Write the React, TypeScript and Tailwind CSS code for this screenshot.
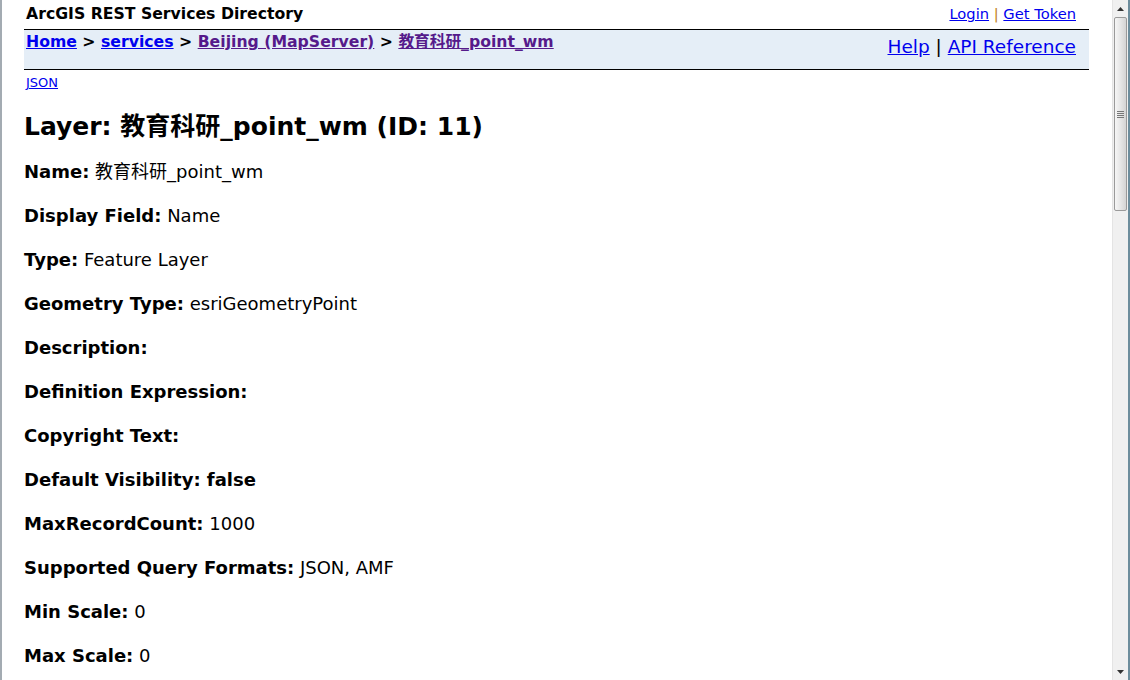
const fields: { label: string; value?: string }[] = [
  { label: "Name:", value: "教育科研_point_wm" },
  { label: "Display Field:", value: "Name" },
  { label: "Type:", value: "Feature Layer" },
  { label: "Geometry Type:", value: "esriGeometryPoint" },
  { label: "Description:" },
  { label: "Definition Expression:" },
  { label: "Copyright Text:" },
  { label: "Default Visibility: false" },
  { label: "MaxRecordCount:", value: "1000" },
  { label: "Supported Query Formats:", value: "JSON, AMF" },
  { label: "Min Scale:", value: "0" },
  { label: "Max Scale:", value: "0" },
];

const font = "font-['Verdana','DejaVu_Sans','Noto_Sans_CJK_SC',sans-serif]";

function Scrollbar() {
  return (
    <div className="flex w-[16px] shrink-0 flex-col bg-[#f0f0f0] border-l border-[#e4e4e4]">
      <div className="flex h-[17px] items-center justify-center">
        <svg width="7" height="4" viewBox="0 0 7 4">
          <path d="M3.5 0 L7 4 L0 4 Z" fill="#333" />
        </svg>
      </div>
      <div className="mx-[1px] flex h-[194px] items-center justify-center rounded-[2px] border border-[#9a9a9a] bg-gradient-to-r from-[#f6f6f6] via-[#e6e6e6] to-[#d4d4d4]">
        <div className="flex flex-col gap-[1px]">
          <div className="h-[1px] w-[7px] bg-[#777]" />
          <div className="h-[1px] w-[7px] bg-[#777]" />
          <div className="h-[1px] w-[7px] bg-[#777]" />
          <div className="h-[1px] w-[7px] bg-[#777]" />
        </div>
      </div>
      <div className="flex-1" />
      <div className="flex h-[17px] items-center justify-center">
        <svg width="7" height="4" viewBox="0 0 7 4">
          <path d="M0 0 L7 0 L3.5 4 Z" fill="#333" />
        </svg>
      </div>
    </div>
  );
}

export default function App() {
  return (
    <div className={`flex h-[680px] w-[1130px] overflow-hidden bg-white text-black ${font}`}>
      <div className="w-[2px] shrink-0 bg-[#a3abb2]" />
      <main className="flex-1 overflow-hidden pl-[22px] pr-[23px]">
        <div className="flex items-end justify-between pt-[3px] pb-[5px] pl-[2px] pr-[13px]">
          <span className="text-[15.7px] font-bold leading-[21px]">ArcGIS REST Services Directory</span>
          <span className="text-[14.7px] leading-[21px]">
            <a href="#" className="text-[#0000ee] underline">Login</a>
            <span className="text-[#c08020]"> | </span>
            <a href="#" className="text-[#0000ee] underline">Get Token</a>
          </span>
        </div>
        <div className="flex h-[41px] justify-between border-y border-black bg-[#e5eef7] pl-[2px] pr-[13px]">
          <div className="pt-[2px] text-[15.7px] font-bold leading-[20px]">
            <a href="#" className="text-[#0000ee] underline">Home</a>
            {" > "}
            <a href="#" className="text-[#0000ee] underline">services</a>
            {" > "}
            <a href="#" className="text-[#551a8b] underline">Beijing (MapServer)</a>
            {" > "}
            <a href="#" className="text-[#551a8b] underline">教育科研_point_wm</a>
          </div>
          <div className="pt-[5px] text-[18.5px] leading-[24px]">
            <a href="#" className="text-[#0000ee] underline">Help</a>
            {" | "}
            <a href="#" className="text-[#0000ee] underline">API Reference</a>
          </div>
        </div>
        <div className="pt-[5px] pl-[2px] text-[13px] leading-[16px]">
          <a href="#" className="text-[#0000ee] underline">JSON</a>
        </div>
        <h2 className="mt-[21px] text-[25px] font-bold leading-[30px]">Layer: 教育科研_point_wm (ID: 11)</h2>
        <div className="mt-[19px] flex flex-col gap-[22px]">
          {fields.map((f) => (
            <div key={f.label} className="text-[18px] leading-[22px]">
              <b>{f.label}</b>
              {f.value && <span> {f.value}</span>}
            </div>
          ))}
        </div>
      </main>
      <Scrollbar />
      <div className="w-[2px] shrink-0 bg-[#6d8d9c]" />
    </div>
  );
}
